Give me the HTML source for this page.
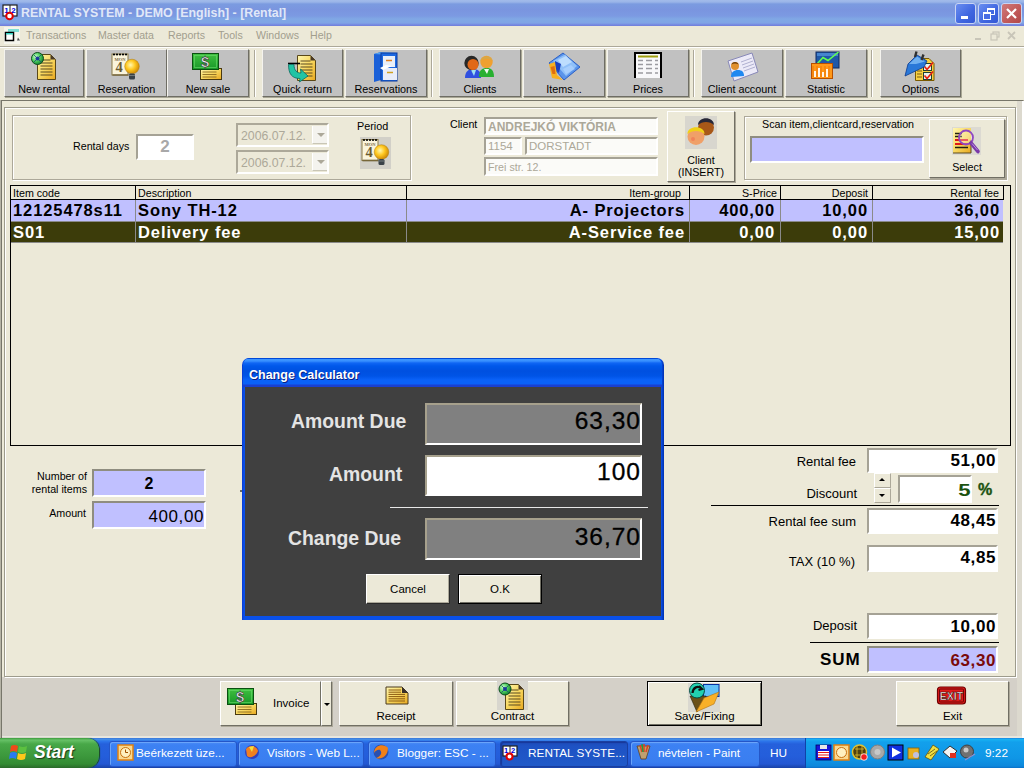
<!DOCTYPE html>
<html><head><meta charset="utf-8">
<style>
*{box-sizing:border-box;margin:0;padding:0}
html,body{width:1024px;height:768px;overflow:hidden;background:#ece9d8;font-family:"Liberation Sans",sans-serif;font-size:11px;color:#000;position:relative}
.a{position:absolute}
.t{position:absolute;white-space:nowrap;line-height:1}
/* title bar */
#title{left:0;top:0;width:1024px;height:26px;background:linear-gradient(#a2bbea 0,#9ab5e8 2px,#7b9be0 4px,#7a95df 10px,#7c9ae2 16px,#80a8e5 19px,#80a4e5 23px,#7585e0 25px,#7080d8 26px)}
#title .txt{left:21px;top:7px;font-size:12.4px;font-weight:bold;color:#e0e8f8}
.wbtn{position:absolute;top:3px;width:21px;height:21px;border-radius:3px;border:1px solid #c8d4f4;background:linear-gradient(135deg,#6a8ef0,#3f66e0 60%,#3458d4)}
.wbtn.close{background:linear-gradient(135deg,#d07a7a,#c05858 60%,#b04848)}
/* menu */
#menu{left:0;top:26px;width:1024px;height:20px;background:#ece9d8}
#menu .t{top:4px;font-size:10.6px;color:#a29e8e}
.line{position:absolute;height:1px}
/* toolbar buttons */
.tb{position:absolute;top:49px;height:48px;background:#c1c1c1;border-top:1px solid #f4f3ee;border-left:1px solid #f4f3ee;border-right:1px solid #6e6d64;border-bottom:1px solid #6e6d64;box-shadow:1px 1px 0 #a9a795}
.tb .t{left:0;right:0;top:33.5px;text-align:center;font-size:10.8px;color:#000}
.tb svg{position:absolute;left:50%;top:3px;margin-left:-16px}
.sep{position:absolute;top:50px;width:2px;height:47px;border-left:1px solid #aca899;border-right:1px solid #fff}
/* generic sunken box */
.box{position:absolute;background:#fff;border-top:2px solid #a5a295;border-left:2px solid #a5a295;border-bottom:2px solid #fff;border-right:2px solid #fff}
.grp{position:absolute;border:1px solid #aca899;box-shadow:inset 1px 1px 0 #fff, 1px 1px 0 #fff}
.btn{position:absolute;background:#ece9d8;border-top:1px solid #fff;border-left:1px solid #fff;border-right:1px solid #716f64;border-bottom:1px solid #716f64;box-shadow:1px 1px 0 #aca899}
.tbi{top:741px;height:26px;border-radius:3px;background:linear-gradient(#4c8cf6 0,#3c81f3 3px,#3a7ef0 20px,#316ee6 26px);border:1px solid #2456c8;box-shadow:inset 1px 1px 0 #6aa4fa}
.tbi.act{background:linear-gradient(#1e4bb8 0,#1e52c4 4px,#2059c8 22px);box-shadow:inset 1px 1px 1px #17379a;border-color:#1a3fa0}
</style></head><body>

<!-- TITLE BAR -->
<div id="title" class="a">
  
  <div class="t txt">RENTAL SYSTEM - DEMO [English] - [Rental]</div>
  <div class="wbtn" style="left:955px"><div class="a" style="left:5px;top:12px;width:7px;height:3px;background:#fff"></div></div>
  <div class="wbtn" style="left:978px"><div class="a" style="left:8px;top:4px;width:8px;height:7px;border:1px solid #fff;border-top-width:2px"></div><div class="a" style="left:4px;top:8px;width:8px;height:8px;border:1px solid #fff;border-top-width:2px;background:#4a6ee4"></div></div>
  <div class="wbtn close" style="left:1001px"><svg class="a" style="left:3px;top:3px" width="13" height="13"><path d="M2 2L11 11M11 2L2 11" stroke="#fff" stroke-width="2.2"/></svg></div>
</div>

<!-- MENU -->
<div id="menu" class="a">
  
  <div class="t" style="left:26px">Transactions</div>
  <div class="t" style="left:98px">Master data</div>
  <div class="t" style="left:168px">Reports</div>
  <div class="t" style="left:218px">Tools</div>
  <div class="t" style="left:256px">Windows</div>
  <div class="t" style="left:310px">Help</div>
  <svg class="a" style="left:970px;top:4px" width="50" height="12">
    <path d="M5 9h6" stroke="#c8c5b8" stroke-width="2"/>
    <rect x="23" y="2" width="6" height="5" fill="none" stroke="#c8c5b8" stroke-width="1.2"/>
    <rect x="21" y="4" width="6" height="6" fill="#ece9d8" stroke="#c8c5b8" stroke-width="1.2"/>
    <path d="M38 2l7 7M45 2l-7 7" stroke="#c8c5b8" stroke-width="1.8"/>
  </svg>
</div>
<div class="line" style="left:0;top:46px;width:1024px;background:#aca899"></div>
<div class="line" style="left:0;top:47px;width:1024px;background:#fff"></div>

<!-- TOOLBAR -->
<div id="toolbar">
  <div class="tb" style="left:4px;width:80px"><div class="t">New rental</div></div>
  <div class="tb" style="left:86px;width:81px"><div class="t">Reservation</div></div>
  <div class="tb" style="left:167px;width:82px"><div class="t">New sale</div></div>
  <div class="sep" style="left:254px"></div>
  <div class="tb" style="left:262px;width:81px"><div class="t">Quick return</div></div>
  <div class="tb" style="left:345px;width:82px"><div class="t">Reservations</div></div>
  <div class="sep" style="left:431px"></div>
  <div class="tb" style="left:439px;width:82px"><div class="t">Clients</div></div>
  <div class="tb" style="left:523px;width:82px"><div class="t">Items...</div></div>
  <div class="tb" style="left:607px;width:82px"><div class="t">Prices</div></div>
  <div class="sep" style="left:693px"></div>
  <div class="tb" style="left:701px;width:82px"><div class="t">Client account</div></div>
  <div class="tb" style="left:785px;width:82px"><div class="t">Statistic</div></div>
  <div class="sep" style="left:871px"></div>
  <div class="tb" style="left:880px;width:81px"><div class="t">Options</div></div>
</div>
<div class="line" style="left:0;top:100px;width:1024px;background:#aca899"></div>

<!-- MAIN PANEL -->
<div id="main">
  <!-- MDI frame -->
  <div class="a" style="left:0;top:101px;width:1024px;height:637px;background:#ece9d8"></div>
  <div class="a" style="left:0;top:100px;width:1px;height:638px;background:#b5b3a5"></div>
  <div class="a" style="left:1px;top:100px;width:1022px;height:1px;background:#77766a"></div>
  <div class="a" style="left:1px;top:100px;width:1px;height:638px;background:#77766a"></div>
  <div class="a" style="left:1017px;top:101px;width:5px;height:637px;background:#dcd9ce"></div>
  <div class="a" style="left:1022px;top:101px;width:2px;height:637px;background:#fff"></div>
  <div class="a" style="left:2px;top:677px;width:1015px;height:60px;background:#d4d0c8"></div>
  <div class="a" style="left:2px;top:736px;width:1020px;height:2px;background:#e8e6de"></div>
  <!-- panel etched -->
  <div class="a" style="left:5px;top:108px;width:1012px;height:570px;border:1px solid #fff"></div>
  <div class="a" style="left:4px;top:107px;width:1012px;height:570px;border:1px solid #9d9b8c"></div>

  <!-- group 1 -->
  <div class="a" style="left:13px;top:116px;width:399px;height:65px;border:1px solid #fff"></div>
  <div class="a" style="left:12px;top:115px;width:399px;height:65px;border:1px solid #aca899"></div>
  <div class="t" style="left:73px;top:141px;font-size:10.7px">Rental days</div>
  <div class="box" style="left:136px;top:134px;width:58px;height:26px"><div class="t" style="left:0;right:0;top:2px;text-align:center;font-size:17px;font-weight:bold;color:#a8a8a8">2</div></div>
  <div class="box" style="left:236px;top:123px;width:93px;height:24px;background:#ece9d8;border-color:#aca899 #fff #fff #aca899"><div class="t" style="left:3px;top:4.5px;font-size:12.3px;color:#aca899">2006.07.12.</div>
    <div class="a" style="left:74px;top:1px;width:15px;height:18px;background:#f4f3ee;border-left:1px solid #fff;border-bottom:1px solid #c9c6b6"><div class="a" style="left:4px;top:7px;width:0;height:0;border-left:4px solid transparent;border-right:4px solid transparent;border-top:4px solid #aca899"></div></div></div>
  <div class="box" style="left:236px;top:150px;width:93px;height:24px;background:#ece9d8;border-color:#aca899 #fff #fff #aca899"><div class="t" style="left:3px;top:4.5px;font-size:12.3px;color:#aca899">2006.07.12.</div>
    <div class="a" style="left:74px;top:1px;width:15px;height:18px;background:#f4f3ee;border-left:1px solid #fff;border-bottom:1px solid #c9c6b6"><div class="a" style="left:4px;top:7px;width:0;height:0;border-left:4px solid transparent;border-right:4px solid transparent;border-top:4px solid #aca899"></div></div></div>
  <div class="t" style="left:357px;top:121px;font-size:10.8px">Period</div>
  

  <!-- client -->
  <div class="t" style="left:450px;top:119px;font-size:10.7px">Client</div>
  <div class="box" style="left:484px;top:117px;width:174px;height:18px;background:#fbfbf8;border-color:#a5a295 #fff #fff #a5a295"><div class="t" style="left:2px;top:2px;font-size:12px;font-weight:bold;color:#aca899">ANDREJKÓ VIKTÓRIA</div></div>
  <div class="box" style="left:484px;top:137px;width:38px;height:18px;background:#fbfbf8;border-color:#a5a295 #fff #fff #a5a295"><div class="t" style="left:2px;top:2px;font-size:11.5px;color:#aca899">1154</div></div>
  <div class="box" style="left:525px;top:137px;width:133px;height:18px;background:#fbfbf8;border-color:#a5a295 #fff #fff #a5a295"><div class="t" style="left:2px;top:2px;font-size:11.5px;color:#aca899">DORSTADT</div></div>
  <div class="box" style="left:484px;top:157px;width:174px;height:19px;background:#fbfbf8;border-color:#a5a295 #fff #fff #a5a295"><div class="t" style="left:2px;top:3px;font-size:10.7px;color:#aca899">Frei str. 12.</div></div>
  <div class="btn" style="left:667px;top:111px;width:68px;height:71px">
    <div class="t" style="left:0;right:0;top:42px;text-align:center;font-size:10.7px;line-height:12px">Client<br>(INSERT)</div></div>

  <!-- scan group -->
  <div class="a" style="left:745px;top:117px;width:263px;height:64px;border:1px solid #fff"></div>
  <div class="a" style="left:744px;top:116px;width:263px;height:64px;border:1px solid #aca899"></div>
  <div class="t" style="left:762px;top:119px;font-size:10.7px">Scan item,clientcard,reservation</div>
  <div class="box" style="left:750px;top:136px;width:174px;height:27px;background:#c0c0ff;border-color:#8f8d80 #fff #fff #8f8d80"></div>
  <div class="btn" style="left:929px;top:119px;width:76px;height:59px">
    <div class="t" style="left:0;right:0;top:42px;text-align:center;font-size:10.7px">Select</div></div>

  <!-- grid -->
  <div class="a" style="left:10px;top:185px;width:1001px;height:261px;border:1px solid #000;background:#ece9d8"></div>
  <div class="a" style="left:11px;top:186px;width:992px;height:14px;background:#ece9d8;border-bottom:1px solid #000"></div>
  <div class="a" style="left:11px;top:200px;width:992px;height:21px;background:#c0c0ff"></div>
  <div class="a" style="left:11px;top:221px;width:992px;height:22px;background:#3c3c0a"></div>
  <div class="a" style="left:135px;top:186px;width:1px;height:14px;background:#000"></div>
  <div class="a" style="left:406px;top:186px;width:1px;height:14px;background:#000"></div>
  <div class="a" style="left:689px;top:186px;width:1px;height:14px;background:#000"></div>
  <div class="a" style="left:780px;top:186px;width:1px;height:14px;background:#000"></div>
  <div class="a" style="left:872px;top:186px;width:1px;height:14px;background:#000"></div>
  <div class="a" style="left:1003px;top:186px;width:1px;height:14px;background:#000"></div>
  <div class="a" style="left:135px;top:200px;width:1px;height:43px;background:#8a8a8a"></div>
  <div class="a" style="left:406px;top:200px;width:1px;height:43px;background:#8a8a8a"></div>
  <div class="a" style="left:689px;top:200px;width:1px;height:43px;background:#8a8a8a"></div>
  <div class="a" style="left:780px;top:200px;width:1px;height:43px;background:#8a8a8a"></div>
  <div class="a" style="left:872px;top:200px;width:1px;height:43px;background:#8a8a8a"></div>
  <div class="a" style="left:11px;top:221px;width:992px;height:1px;background:#8a8a8a"></div>
  <div class="a" style="left:11px;top:242px;width:992px;height:1px;background:#8a8a8a"></div>
  <div class="t" style="left:13px;top:188px;font-size:10.7px">Item code</div>
  <div class="t" style="left:138px;top:188px;font-size:10.7px">Description</div>
  <div class="t" style="right:343px;top:188px;font-size:10.7px">Item-group</div>
  <div class="t" style="right:247px;top:188px;font-size:10.7px">S-Price</div>
  <div class="t" style="right:156px;top:188px;font-size:10.7px">Deposit</div>
  <div class="t" style="right:25px;top:188px;font-size:10.7px">Rental fee</div>
  <div class="t" style="left:13px;top:201.5px;font-size:16.5px;font-weight:bold;letter-spacing:0.9px">12125478s11</div>
  <div class="t" style="left:138px;top:201.5px;font-size:16.5px;font-weight:bold;letter-spacing:0.9px">Sony TH-12</div>
  <div class="t" style="right:339px;top:201.5px;font-size:16.5px;font-weight:bold;letter-spacing:0.9px">A- Projectors</div>
  <div class="t" style="right:249px;top:201.5px;font-size:16.5px;font-weight:bold;letter-spacing:0.9px">400,00</div>
  <div class="t" style="right:156px;top:201.5px;font-size:16.5px;font-weight:bold;letter-spacing:0.9px">10,00</div>
  <div class="t" style="right:24px;top:201.5px;font-size:16.5px;font-weight:bold;letter-spacing:0.9px">36,00</div>
  <div class="t" style="left:13px;top:223.5px;font-size:16.5px;font-weight:bold;letter-spacing:0.9px;color:#fff">S01</div>
  <div class="t" style="left:138px;top:223.5px;font-size:16.5px;font-weight:bold;letter-spacing:0.9px;color:#fff">Delivery fee</div>
  <div class="t" style="right:339px;top:223.5px;font-size:16.5px;font-weight:bold;letter-spacing:0.9px;color:#fff">A-Service fee</div>
  <div class="t" style="right:249px;top:223.5px;font-size:16.5px;font-weight:bold;letter-spacing:0.9px;color:#fff">0,00</div>
  <div class="t" style="right:156px;top:223.5px;font-size:16.5px;font-weight:bold;letter-spacing:0.9px;color:#fff">0,00</div>
  <div class="t" style="right:24px;top:223.5px;font-size:16.5px;font-weight:bold;letter-spacing:0.9px;color:#fff">15,00</div>

  <!-- bottom left -->
  <div class="t" style="right:937px;top:470px;font-size:10.7px;text-align:right;line-height:13px">Number of<br>rental items</div>
  <div class="box" style="left:92px;top:469px;width:114px;height:28px;background:#c0c0ff;border-color:#8f8d80 #fff #fff #8f8d80"><div class="t" style="left:0;right:0;top:5px;text-align:center;font-size:16px;font-weight:bold">2</div></div>
  <div class="t" style="right:938px;top:508px;font-size:10.7px">Amount</div>
  <div class="box" style="left:92px;top:501px;width:114px;height:28px;background:#c0c0ff;border-color:#8f8d80 #fff #fff #8f8d80"><div class="t" style="right:0px;top:5px;font-size:17px;letter-spacing:0.6px">400,00</div></div>

  <!-- right totals -->
  <div class="t" style="right:168px;top:455px;font-size:13px">Rental fee</div>
  <div class="box" style="left:867px;top:448px;width:131px;height:25px"><div class="t" style="right:0px;top:2px;font-size:17px;font-weight:bold;letter-spacing:0.6px">51,00</div></div>
  <div class="t" style="right:167px;top:487px;font-size:13px">Discount</div>
  <div class="btn" style="left:874px;top:473px;width:17px;height:15px;border-color:#fff #aca899 #aca899 #fff;box-shadow:none"><div class="a" style="left:4px;top:4px;border-left:3px solid transparent;border-right:3px solid transparent;border-bottom:3px solid #000"></div></div>
  <div class="btn" style="left:874px;top:488px;width:17px;height:15px;border-color:#fff #aca899 #aca899 #fff;box-shadow:none"><div class="a" style="left:4px;top:5px;border-left:3px solid transparent;border-right:3px solid transparent;border-top:3px solid #000"></div></div>
  <div class="box" style="left:898px;top:475px;width:74px;height:28px"><div class="t" style="right:0px;top:5px;font-size:17px;font-weight:bold;color:#1b5210;transform:scaleX(1.3);transform-origin:right">5</div></div>
  <div class="t" style="left:978px;top:482px;font-size:16px;font-weight:bold;color:#1b5210;-webkit-text-stroke:0.4px #1b5210">%</div>
  <div class="a" style="left:711px;top:505px;width:288px;height:1px;background:#000"></div>
  <div class="t" style="right:168px;top:515px;font-size:13px">Rental fee sum</div>
  <div class="box" style="left:867px;top:508px;width:131px;height:26px"><div class="t" style="right:0px;top:2px;font-size:17px;font-weight:bold;letter-spacing:0.6px">48,45</div></div>
  <div class="t" style="right:169px;top:554.5px;font-size:13px">TAX (10 %)</div>
  <div class="box" style="left:867px;top:545px;width:131px;height:27px"><div class="t" style="right:0px;top:2px;font-size:17px;font-weight:bold;letter-spacing:0.6px">4,85</div></div>
  <div class="t" style="right:167px;top:619px;font-size:13px">Deposit</div>
  <div class="box" style="left:867px;top:613px;width:131px;height:26px"><div class="t" style="right:0px;top:3px;font-size:17px;font-weight:bold;letter-spacing:0.6px">10,00</div></div>
  <div class="a" style="left:810px;top:642px;width:189px;height:1px;background:#000"></div>
  <div class="t" style="left:820px;top:651px;font-size:17px;font-weight:bold;letter-spacing:0.9px">SUM</div>
  <div class="box" style="left:867px;top:646px;width:131px;height:27px;background:#c0c0ff;border-color:#8f8d80 #fff #fff #8f8d80"><div class="t" style="right:0px;top:4px;font-size:17px;font-weight:bold;letter-spacing:0.6px;color:#7a0a0a">63,30</div></div>

  <!-- bottom buttons -->
  <div class="btn" style="left:220px;top:681px;width:101px;height:45px"><div class="a" id="invicon" style="left:4px;top:3px;width:34px;height:34px"></div><div class="t" style="left:52px;top:16px;font-size:11.5px">Invoice</div></div>
  <div class="btn" style="left:321px;top:681px;width:11px;height:45px"><div class="a" style="left:2px;top:21px;border-left:3px solid transparent;border-right:3px solid transparent;border-top:3px solid #000"></div></div>
  <div class="btn" style="left:339px;top:681px;width:114px;height:45px"><div class="a" id="recicon" style="left:41px;top:2px;width:32px;height:28px"></div><div class="t" style="left:0;right:0;top:29px;text-align:center;font-size:11.5px">Receipt</div></div>
  <div class="btn" style="left:456px;top:681px;width:113px;height:45px"><div class="a" id="conicon" style="left:40px;top:1px;width:32px;height:30px"></div><div class="t" style="left:0;right:0;top:29px;text-align:center;font-size:11.5px">Contract</div></div>
  <div class="btn" style="left:647px;top:681px;width:115px;height:45px;border:1px solid #000;box-shadow:inset 1px 1px 0 #fff,inset -1px -1px 0 #716f64"><div class="a" id="saveicon" style="left:40px;top:1px;width:32px;height:30px"></div><div class="t" style="left:0;right:0;top:29px;text-align:center;font-size:11.5px">Save/Fixing</div></div>
  <div class="btn" style="left:896px;top:681px;width:113px;height:45px"><div class="a" id="exiticon" style="left:40px;top:4px;width:32px;height:22px"></div><div class="t" style="left:0;right:0;top:29px;text-align:center;font-size:11.5px">Exit</div></div>
</div>

<div class="a" style="left:240px;top:490px;width:2px;height:2px;background:#6a6a60"></div>
<!-- DIALOG -->
<div id="dialog">
  <div class="a" style="left:242px;top:358px;width:422px;height:262px;background:linear-gradient(90deg,#0a3ad0 0,#0a50e8 2px,#0a50e8 419px,#0030b0 422px);border-radius:7px 7px 0 0"></div>
  <div class="a" style="left:243px;top:358px;width:419px;height:29px;border-radius:7px 7px 0 0;background:linear-gradient(#0048d8 0,#0048d8 1px,#3c94ff 1.5px,#3890ff 3px,#1066f4 5px,#0058ea 8px,#0050e0 13px,#0054e6 18px,#0a62f8 22px,#0a62f8 26px,#1a40d0 27px,#1a40d0 29px)"></div>
  <div class="t" style="left:249px;top:368.5px;font-size:12.5px;font-weight:bold;color:#fff;text-shadow:1px 1px 0 #0a1e80">Change Calculator</div>
  <div class="a" style="left:245px;top:387px;width:416px;height:229px;background:#404040"></div>
  <div class="t" style="left:291px;top:412px;font-size:19.4px;font-weight:bold;color:#e4e4e4">Amount Due</div>
  <div class="a" style="left:425px;top:403px;width:217px;height:42px;background:#808080;border-top:2px solid #a6a08c;border-left:2px solid #a6a08c;border-right:2px solid #fff;border-bottom:2px solid #fff"><div class="t" style="right:-1px;top:4px;font-size:24.5px;letter-spacing:1px;color:#000;-webkit-text-stroke:0.3px #000">63,30</div></div>
  <div class="t" style="left:329px;top:465px;font-size:19.4px;font-weight:bold;color:#e4e4e4">Amount</div>
  <div class="a" style="left:425px;top:455px;width:217px;height:41px;background:#fff;border-top:2px solid #a6a08c;border-left:2px solid #a6a08c;border-right:2px solid #fff;border-bottom:2px solid #fff"><div class="t" style="right:-1px;top:3px;font-size:24.5px;letter-spacing:1px;color:#000;-webkit-text-stroke:0.3px #000">100</div></div>
  <div class="a" style="left:390px;top:507px;width:258px;height:1px;background:#e8e8e8"></div>
  <div class="t" style="left:288px;top:529px;font-size:19.4px;font-weight:bold;color:#e4e4e4">Change Due</div>
  <div class="a" style="left:425px;top:518px;width:217px;height:42px;background:#808080;border-top:2px solid #a6a08c;border-left:2px solid #a6a08c;border-right:2px solid #fff;border-bottom:2px solid #fff"><div class="t" style="right:-1px;top:5px;font-size:24.5px;letter-spacing:1px;color:#000;-webkit-text-stroke:0.3px #000">36,70</div></div>
  <div class="btn" style="left:366px;top:574px;width:84px;height:30px;border-right-color:#2a2a2a;border-bottom-color:#2a2a2a;box-shadow:inset -1px -1px 0 #aca899"><div class="t" style="left:0;right:0;top:9px;text-align:center;font-size:11.5px">Cancel</div></div>
  <div class="btn" style="left:458px;top:574px;width:84px;height:30px;border:1px solid #000;box-shadow:inset 1px 1px 0 #fff,inset -1px -1px 0 #716f64"><div class="t" style="left:0;right:0;top:9px;text-align:center;font-size:11.5px">O.K</div></div>
</div>

<!-- TASKBAR -->
<div id="taskbar">
  <div class="a" style="left:0;top:738px;width:1024px;height:30px;background:linear-gradient(#3168d5 0,#4993e6 1px,#2d77ec 3px,#2560dc 6px,#245edb 18px,#2357d2 26px,#1941a5 30px)"></div>
  <div class="a" style="left:0;top:738px;width:99px;height:30px;border-radius:0 12px 12px 0;background:linear-gradient(#3c9a3c 0,#67c267 2px,#48a848 6px,#3c983c 18px,#338b33 26px,#2a6a2a 30px);box-shadow:1px 0 1px #1b4a1b"></div>
  <svg class="a" style="left:8px;top:743px" width="22" height="20" viewBox="0 0 22 20">
    <path d="M3 3q3-2 7 0l-1 6q-4-2-7 0z" fill="#f04a1a"/>
    <path d="M11 3q4 2 8 0l-1 6q-4 2-8 0z" fill="#5cc040"/>
    <path d="M2 10q3-2 7 0l-1 6q-4-2-7 0z" fill="#2a7af0"/>
    <path d="M10 10q4 2 8 0l-1 6q-4 2-8 0z" fill="#ffc81a"/>
  </svg>
  <div class="t" style="left:34px;top:744px;font-size:17.5px;font-weight:bold;font-style:italic;color:#fff;text-shadow:1px 1px 1px #1b3a1b">Start</div>

  <div class="a tbi" style="left:109px;width:128px"></div>
  <div class="a tbi" style="left:238px;width:126px"></div>
  <div class="a tbi" style="left:368px;width:128px"></div>
  <div class="a tbi act" style="left:500px;width:128px"></div>
  <div class="a tbi" style="left:630px;width:130px"></div>
  <div class="t" style="left:136px;top:748px;font-size:11.8px;color:#fff">Beérkezett üze...</div>
  <div class="t" style="left:267px;top:748px;font-size:11.8px;color:#fff">Visitors - Web L...</div>
  <div class="t" style="left:397px;top:748px;font-size:11.8px;color:#fff">Blogger: ESC - ...</div>
  <div class="t" style="left:528px;top:748px;font-size:11.8px;color:#fff">RENTAL SYSTE...</div>
  <div class="t" style="left:658px;top:748px;font-size:11.8px;color:#fff">névtelen - Paint</div>
  <div class="t" style="left:770px;top:748px;font-size:11.8px;color:#fff">HU</div>
  <div class="a" style="left:805px;top:738px;width:219px;height:30px;background:linear-gradient(#1a6fd8 0,#18b4f4 1px,#12a0ec 4px,#0f96e6 20px,#0d88dc 28px,#0a70c8 30px);border-left:1px solid #1042a8"></div>
  <div class="t" style="left:985px;top:748px;font-size:11.8px;color:#fff">9:22</div>
  <div id="trayicons"></div>
</div>

<svg id="icons" class="a" style="left:0;top:0;pointer-events:none" width="1024" height="768" viewBox="0 0 1024 768">
<defs>
  <linearGradient id="gy" x1="0" y1="0" x2="1" y2="1"><stop offset="0" stop-color="#fff6b0"/><stop offset=".5" stop-color="#f8d860"/><stop offset="1" stop-color="#e8a820"/></linearGradient>
  <radialGradient id="gg" cx=".35" cy=".35" r=".7"><stop offset="0" stop-color="#c8ffc8"/><stop offset=".5" stop-color="#50d060"/><stop offset="1" stop-color="#108030"/></radialGradient>
  <radialGradient id="gb" cx=".4" cy=".4" r=".7"><stop offset="0" stop-color="#fff8b0"/><stop offset=".45" stop-color="#ffc820"/><stop offset="1" stop-color="#c07800"/></radialGradient>
  <linearGradient id="gm" x1="0" y1="0" x2="0" y2="1"><stop offset="0" stop-color="#40c040"/><stop offset="1" stop-color="#189828"/></linearGradient>
  <g id="doc">
    <path d="M0 0H13L18 5V25H0Z" fill="url(#gy)" stroke="#5a4818" stroke-width="1"/>
    <path d="M13 0V5H18Z" fill="#4a3a28"/>
    <path d="M3 5.5H13M3 8.5H15M3 11.5H15M3 14.5H15M3 17.5H15M3 20.5H15" stroke="#5a4a20" stroke-width="1"/>
  </g>
  <g id="globe">
    <circle cx="0" cy="0" r="6" fill="url(#gg)" stroke="#0c4a1c" stroke-width="1"/>
    <path d="M-3.5-3.5L3.5 3.5M3.5-3.5L-3.5 3.5" stroke="#1a4a7a" stroke-width="1" opacity=".8"/>
    <circle cx="0" cy="0" r="2" fill="#1a3a9a"/>
  </g>
  <g id="cal">
    <rect x="0.5" y="1" width="16" height="21" fill="#faf4dc" stroke="#8a7a48" stroke-width="1"/>
    <rect x="1" y="21" width="16" height="2" fill="#6a5a30" opacity=".6"/>
    <g fill="#000"><circle cx="2.5" cy="1.5" r="1.1"/><circle cx="5.5" cy="1.5" r="1.1"/><circle cx="8.5" cy="1.5" r="1.1"/><circle cx="11.5" cy="1.5" r="1.1"/><circle cx="14.5" cy="1.5" r="1.1"/></g>
    <text x="8.5" y="7.5" font-size="4.5" font-weight="bold" text-anchor="middle" fill="#7a6a48" font-family="Liberation Serif">MON</text>
    <text x="7.5" y="18.5" font-size="14.5" font-weight="bold" text-anchor="middle" fill="#6a5a30" font-family="Liberation Serif">4</text>
  </g>
  <g id="bulb">
    <circle cx="0" cy="0" r="7.3" fill="url(#gb)" stroke="#b08010" stroke-width=".5"/>
    <rect x="-3" y="7" width="6" height="6" rx="1.5" fill="#3a4248"/>
    <rect x="-3" y="8.5" width="6" height="1" fill="#70787a"/>
  </g>
  <g id="bill">
    <rect x="0" y="0" width="26" height="16" fill="url(#gm)" stroke="#0a5010" stroke-width="1"/>
    <rect x="2" y="2" width="22" height="12" fill="none" stroke="#70e070" stroke-width=".8" opacity=".7"/>
    <text x="12.5" y="13.5" font-size="14.5" font-weight="bold" text-anchor="middle" fill="#f4f0f4" stroke="#202020" stroke-width=".5" font-family="Liberation Sans">$</text>
  </g>
  <g id="ydoc">
    <rect x="0" y="0" width="21" height="11" fill="url(#gy)" stroke="#4a3a10" stroke-width="1"/>
    <path d="M2 3.5H16M2 6H16M2 8.5H16" stroke="#8a6a20" stroke-width=".9"/>
  </g>
</defs>

<!-- title icon -->
<g transform="translate(2,4)">
  <rect x="1" y="1" width="14" height="11" fill="#fff" stroke="#202020" stroke-width="1.2"/>
  <line x1="8" y1="1" x2="8" y2="12" stroke="#202020" stroke-width="1"/>
  <text x="2.2" y="8.5" font-size="8" font-weight="bold" fill="#0000e0" font-family="Liberation Sans">1</text>
  <text x="9.2" y="8.5" font-size="8" font-weight="bold" fill="#0000e0" font-family="Liberation Sans">2</text>
  <circle cx="7.5" cy="12" r="3.3" fill="#fff" stroke="#e00000" stroke-width="2"/>
</g>

<!-- menu icon -->
<g transform="translate(2,27)">
  <rect x="2" y="0" width="16" height="17" fill="#f8f8f2" opacity=".8"/>
  <rect x="6" y="2" width="11" height="3" fill="#60d8d0" opacity=".8"/>
  <rect x="3.5" y="5.5" width="8" height="8" fill="#fff" stroke="#000" stroke-width="1.5"/>
  <rect x="4" y="6" width="7" height="1.5" fill="#30d0c0"/>
  <path d="M16 10.5l2 3-3 0z" fill="#505050"/>
</g>

<!-- 1 New rental -->
<use href="#doc" transform="translate(37.5,54.5)"/>
<use href="#globe" transform="translate(37.5,58.5)"/>
<!-- 2 Reservation -->
<use href="#cal" transform="translate(111.5,53)"/>
<use href="#bulb" transform="translate(132,66.5)"/>
<!-- 3 New sale -->
<use href="#ydoc" transform="translate(200.5,68.5)"/>
<use href="#bill" transform="translate(192.5,53.5)"/>
<!-- 4 Quick return -->
<use href="#doc" transform="translate(297.5,55.5)"/>
<path d="M288 63.5H300" stroke="#000" stroke-width="1.6"/>
<path d="M288.5 64.5 L294 64.5 C294 70.5 297 73 301 73 L300.5 69 L308 76 L299.5 82 L300 78.5 C292 78.5 288.5 74 288.5 64.5Z" fill="#22c4a4" stroke="#0a6a60" stroke-width=".8"/>
<!-- 5 Reservations cabinet -->
<path d="M374 54 L381 52 L381 80 L374 82Z" fill="#1a60d8"/>
<path d="M374 54 L381 52 L397 53 L389 55Z" fill="#50a0f0"/>
<rect x="381" y="53" width="16" height="28" fill="#1c68e0" stroke="#0a3aa0" stroke-width="1"/>
<rect x="383" y="56" width="12" height="11" fill="#e8eef8"/>
<path d="M386 60.5H392" stroke="#e08020" stroke-width="1.5"/>
<rect x="383" y="68" width="14" height="12" fill="#e8ecf8"/>
<path d="M387 72.5H393" stroke="#d0a020" stroke-width="1.5"/>
<path d="M380 68 L386 65 L392 66 L383 70Z" fill="#fff"/>
<!-- 6 Clients -->
<path d="M465 78 C465 71 469 69 473 69 C478 69 481 71 481 78Z" fill="#3050e0"/>
<path d="M471 70 L474 76 L476 70Z" fill="#a0e0f0"/>
<circle cx="471.5" cy="63" r="7.2" fill="#282828"/>
<circle cx="473" cy="64.5" r="5.5" fill="#e06818"/>
<path d="M479 77 C479 70 482 68 487 68 C491 68 494 70 494 77Z" fill="#28b030"/>
<path d="M484 69 L487 74 L489 69Z" fill="#f0f8f0"/>
<circle cx="486.5" cy="62" r="6.2" fill="#f0a030"/>
<path d="M480.5 61 C481 55 492 55 492.5 61 C490 58 483 58 480.5 61Z" fill="#d8a848"/>
<!-- 7 Items -->
<path d="M549 63 L563 53 L580 67 L564 80Z" fill="#5a94ea" stroke="#2a60c8" stroke-width="1"/>
<path d="M553 61 L565 54.5 L577 66 L566 76Z" fill="#90c0f8"/>
<path d="M558 60 L566 56 L572 62 L563 67Z" fill="#c8e4ff" opacity=".8"/>
<path d="M563 69 L571 65 L575 69 L566 74Z" fill="#b0d4ff" opacity=".7"/>
<path d="M555 61 L561 64 L559 73 L554 69Z" fill="#1a40c0"/>
<path d="M549 64 L555 62 L557 75 L563 80 L552 78Z" fill="#f8b020"/>
<path d="M550.5 67 L554.5 66 L555.5 74 L552.5 74Z" fill="#e07010"/>
<!-- 8 Prices -->
<rect x="636" y="54" width="24" height="24" fill="#f8f8fa"/>
<path d="M635 78V53H661V78" fill="none" stroke="#000" stroke-width="2"/>
<path d="M638 56.5H658" stroke="#a0a010" stroke-width="2"/>
<path d="M638 60.5H643M646 60.5H652M655 60.5H658M638 64.5H643M646 64.5H652M655 64.5H658M638 68.5H643M646 68.5H652M655 68.5H658M638 73H643M646 73H652M655 73H658" stroke="#9a9aa0" stroke-width="1.5"/>
<!-- 9 Client account -->
<path d="M728 61 L752 53 L758 72 L734 81Z" fill="#eceaf8" stroke="#8888b8" stroke-width="1"/>
<path d="M741 62L752 58M742 65L753 61M743 68L754 64M744 71L755 67" stroke="#b0b0d0" stroke-width="1"/>
<path d="M731 77 C731 72 734 70 738 70 C742 70 744 72 744 76Z" fill="#2088f0"/>
<circle cx="735" cy="66" r="4" fill="#e09030"/>
<path d="M731.5 64.5 C732 61 738 61 738.5 64.5 C736 63 734 63 731.5 64.5Z" fill="#704010"/>
<!-- 10 Statistic -->
<rect x="816" y="52" width="23" height="16" fill="#2058a8" stroke="#102a60" stroke-width="1"/>
<rect x="817" y="53" width="21" height="3" fill="#5090d8" opacity=".8"/>
<path d="M817 64 L823 57.5 L828 60.5 L838.5 52" fill="none" stroke="#60ff50" stroke-width="1.6"/>
<rect x="811.5" y="63.5" width="21" height="15" fill="#ff9818" stroke="#b85000" stroke-width="1"/>
<path d="M815 71V77M819 68V77M823 72V77M827 69V77" stroke="#fff" stroke-width="1.8"/><path d="M813 66V77M817 66V77M821 66V77M825 66V77M829 66V77" stroke="#e06000" stroke-width="1" opacity=".6"/>
<!-- 11 Options -->
<path d="M915.5 58.5 H929 L934 63.5 V80.5 H915.5Z" fill="#f8d040" stroke="#7a5a00" stroke-width="1"/>
<path d="M917 68H922M917 71H922M917 74H922M917 77H922" stroke="#7a5a10" stroke-width="1"/>
<rect x="923.5" y="63.5" width="8" height="7" fill="#e8f4f0" stroke="#204030" stroke-width="1"/>
<rect x="923.5" y="72.5" width="8" height="7" fill="#e8f4f0" stroke="#204030" stroke-width="1"/>
<path d="M924.5 66.5 L927 69.5 L933 62.5 M924.5 75.5 L927 78.5 L933 71.5" fill="none" stroke="#e82010" stroke-width="1.7"/>
<path d="M905 76 L908 64 L917 55 L927 61 L924 67 Z" fill="#2a78d8" stroke="#0a3a90" stroke-width=".8"/>
<path d="M909 64 L917 56.5 L925 61.5 L916 64Z" fill="#70b0f0"/>
<path d="M916.5 51.5 L915 57 M923.5 54.5 L921.5 60" stroke="#303030" stroke-width="2.4"/>
<!-- Period icon -->
<rect x="360" y="137" width="31" height="32" fill="#d2d0c8"/>
<use href="#cal" transform="translate(361.5,138.5)"/>
<use href="#bulb" transform="translate(381.5,152)"/>

<!-- Client icon -->
<rect x="685" y="116" width="32" height="33" fill="#d8d6ce"/>
<circle cx="706" cy="127.5" r="8" fill="#a85818"/>
<path d="M698 125 C698 116 714 116 714 125 C710 121 702 121 698 125Z" fill="#282838"/>
<circle cx="696" cy="136.5" r="8.5" fill="#f0a068"/>
<path d="M687.5 134 C687 125 705 125 704.5 134 C700 130 692 130 687.5 134Z" fill="#f0d018"/>
<circle cx="693" cy="139" r="2" fill="#f07050" opacity=".6"/>

<!-- Select icon -->
<rect x="952" y="127" width="29" height="28" fill="#dcdad2"/>
<rect x="953" y="128" width="18" height="25" fill="url(#gy)"/>
<path d="M953 153H971V140" stroke="#5a4a20" stroke-width="1" fill="none"/>
<path d="M955 133.5H962M955 136.5H962M955 147.5H968" stroke="#202010" stroke-width="1.3"/>
<path d="M955 140H968M955 144H968" stroke="#e01818" stroke-width="2"/>
<circle cx="966" cy="137.5" r="7" fill="#ffffff" fill-opacity=".3" stroke="#9048c0" stroke-width="1.8"/>
<path d="M971 143 L978 151.5" stroke="#7a38a8" stroke-width="3.6" stroke-linecap="round"/>
<path d="M972 143.5 L977.5 150" stroke="#b890e0" stroke-width="1"/>
<!-- Invoice icon -->
<use href="#ydoc" transform="translate(235.5,703.5)"/>
<use href="#bill" transform="translate(227.5,688.5)"/>
<!-- Receipt icon -->
<g transform="translate(386,687)">
  <path d="M0 0H16L22 6V17H0Z" fill="url(#gy)" stroke="#4a3a20" stroke-width="1"/>
  <path d="M16 0V6H22Z" fill="#3a3028"/>
  <path d="M2.5 3H15M2.5 5.2H15M2.5 7.4H19M2.5 9.6H19M2.5 11.8H19M2.5 14H19" stroke="#8a5a10" stroke-width="1"/>
</g>
<!-- Contract icon -->
<rect x="497" y="681" width="31" height="29" fill="#d8d6ce"/>
<use href="#doc" transform="translate(505.5,684.5)"/>
<use href="#globe" transform="translate(505,689)"/>
<!-- Save icon -->
<rect x="688" y="683" width="32" height="29" fill="#dad8d0"/>
<rect x="703.5" y="684.5" width="15.5" height="12" fill="#60c0f8" stroke="#0830a0" stroke-width="1"/>
<path d="M690 696 L706 696 L697 712Z" fill="#6a5018" stroke="#202010" stroke-width=".6"/>
<path d="M696 712 L704 698 L719 692 L714 704Z" fill="#f8b028" stroke="#b07010" stroke-width=".6"/>
<circle cx="697" cy="690.5" r="7.5" fill="#22d0b0" stroke="#084a40" stroke-width="1"/>
<path d="M692.5 693 C693 687 698 685.5 701.5 688.5 M699 686 L702 689 L698.5 690" fill="none" stroke="#101010" stroke-width="2.2"/>
<!-- Exit icon -->
<rect x="937.5" y="687" width="28" height="17" rx="3" fill="#e01a1a" stroke="#700000" stroke-width="1.2"/>
<rect x="939.5" y="689" width="24" height="13" rx="1" fill="none" stroke="#500000" stroke-width=".8"/>
<text x="951.5" y="700" font-size="10.5" font-weight="bold" text-anchor="middle" fill="#fff" stroke="#200000" stroke-width=".5" font-family="Liberation Sans">EXIT</text>

<!-- taskbar icons -->
<rect x="118" y="745" width="15" height="15" fill="#f8d890" stroke="#e08010" stroke-width="1.5"/>
<circle cx="125.5" cy="752.5" r="5" fill="#fff0c0" stroke="#c87010" stroke-width="1"/>
<path d="M125.5 749.5V752.5H128" stroke="#a05000" stroke-width="1" fill="none"/>
<circle cx="252" cy="752" r="7" fill="#3040c0"/>
<path d="M246 749 C250 744 257 746 258 751 C256 756 251 759 247 756Z" fill="#f08020"/>
<path d="M249 747 L254 746 L252 752Z" fill="#f0e040"/>
<circle cx="381" cy="752" r="7.5" fill="#2a50b0"/>
<path d="M374 753 C374 745 384 743 388 748 C388 756 381 760 376 758 C380 757 383 753 380 750 C378 749 375 751 374 753Z" fill="#f08018"/>
<g transform="translate(502,745)">
  <rect x="1" y="1" width="14" height="10" fill="#fff" stroke="#202020" stroke-width="1.2"/>
  <line x1="8" y1="1" x2="8" y2="11" stroke="#202020"/>
  <text x="2" y="8" font-size="7.5" font-weight="bold" fill="#0000e0" font-family="Liberation Sans">1</text>
  <text x="9" y="8" font-size="7.5" font-weight="bold" fill="#0000e0" font-family="Liberation Sans">2</text>
  <circle cx="7.5" cy="11.5" r="3" fill="#fff" stroke="#e00000" stroke-width="2"/>
</g>
<path d="M637 746 L641 759 L646 759 L650 746Z" fill="#c0a070" stroke="#604020" stroke-width=".8"/>
<path d="M640 745 L642 752 M644 744 L644 752 M648 745 L646 752" stroke="#e04020" stroke-width="1.5"/>
<path d="M642 744 L643 752" stroke="#20a040" stroke-width="1.5"/>
<!-- tray -->
<rect x="816" y="745" width="15" height="15" fill="#1818d8" stroke="#000060" stroke-width=".8"/>
<rect x="820" y="745" width="7" height="4" fill="#e8e8e8"/>
<rect x="818" y="751" width="11" height="7" fill="#fff"/>
<path d="M818 752.5H829M818 755H829M818 757.5H829" stroke="#e81818" stroke-width="1.2"/>
<rect x="834" y="745" width="15" height="15" fill="#f8d890" stroke="#e08010" stroke-width="1.5"/>
<circle cx="841.5" cy="752.5" r="5" fill="#fff0c0" stroke="#c87010" stroke-width="1"/>
<circle cx="859.5" cy="752" r="7" fill="#504010" stroke="#e0c030" stroke-width="1.5"/>
<path d="M855 749H864M855 755H864M857 746V758M862 746V758" stroke="#e0c030" stroke-width=".8"/>
<circle cx="864" cy="757" r="3.3" fill="#f02020" stroke="#fff" stroke-width=".8"/>
<circle cx="877.5" cy="752" r="7" fill="#a8a8a8" stroke="#808080" stroke-width="1"/>
<circle cx="877.5" cy="752" r="3" fill="#c8c8c8"/>
<rect x="888" y="745" width="15" height="15" fill="#1030e0" stroke="#000" stroke-width="1"/>
<path d="M892 747.5V757.5L901 752.5Z" fill="#fff"/>
<rect x="908" y="748" width="11" height="11" fill="#e8b020" stroke="#806010" stroke-width=".8"/>
<circle cx="916" cy="755" r="3" fill="#c0c0e0"/>
<path d="M925 757 L933 745 L939 749 L931 760Z" fill="#f0e040" stroke="#605010" stroke-width=".8"/>
<path d="M928 754L935 749M930 756L937 751" stroke="#605010" stroke-width=".8"/>
<path d="M943 752 L950 746 L957 751 L950 758Z" fill="#f4f4f4" stroke="#303030" stroke-width="1"/>
<rect x="950" y="753" width="6" height="5" fill="#e03020"/>
<circle cx="967" cy="751.5" r="6.5" fill="#707070" stroke="#404040" stroke-width="1"/>
<circle cx="966" cy="750" r="2.5" fill="#c8c8c8"/>
<path d="M965 760 L975 754" stroke="#9090d0" stroke-width="1.2"/>
</svg>

</body></html>
